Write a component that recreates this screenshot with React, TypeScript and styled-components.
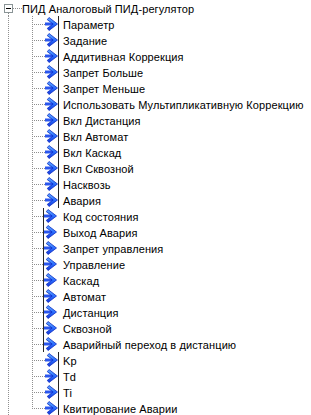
import styled, { createGlobalStyle } from 'styled-components';

type Kind = 'in' | 'out';

const items: { label: string; kind: Kind }[] = [
  { label: 'Параметр', kind: 'in' },
  { label: 'Задание', kind: 'in' },
  { label: 'Аддитивная Коррекция', kind: 'in' },
  { label: 'Запрет Больше', kind: 'in' },
  { label: 'Запрет Меньше', kind: 'in' },
  { label: 'Использовать Мультипликативную Коррекцию', kind: 'in' },
  { label: 'Вкл Дистанция', kind: 'in' },
  { label: 'Вкл Автомат', kind: 'in' },
  { label: 'Вкл Каскад', kind: 'in' },
  { label: 'Вкл Сквозной', kind: 'in' },
  { label: 'Насквозь', kind: 'in' },
  { label: 'Авария', kind: 'in' },
  { label: 'Код состояния', kind: 'out' },
  { label: 'Выход Авария', kind: 'out' },
  { label: 'Запрет управления', kind: 'out' },
  { label: 'Управление', kind: 'out' },
  { label: 'Каскад', kind: 'out' },
  { label: 'Автомат', kind: 'out' },
  { label: 'Дистанция', kind: 'out' },
  { label: 'Сквозной', kind: 'out' },
  { label: 'Аварийный переход в дистанцию', kind: 'out' },
  { label: 'Kp', kind: 'in' },
  { label: 'Td', kind: 'in' },
  { label: 'Ti', kind: 'in' },
  { label: 'Квитирование Аварии', kind: 'in' },
];

const LINE = '#8f8f8f';
const dotsDown = `repeating-linear-gradient(to bottom, ${LINE} 0 1px, transparent 1px 2px)`;
const dotsRight = `repeating-linear-gradient(to right, ${LINE} 0 1px, transparent 1px 2px)`;

const GlobalStyle = createGlobalStyle`
  body {
    margin: 0;
    background: #fff;
  }
`;

const Tree = styled.div`
  width: 311px;
  height: 415px;
  overflow: hidden;
  background: #fff;
  font-family: "Liberation Sans", Arial, sans-serif;
  font-size: 11px;
  letter-spacing: 0.1px;
  color: #000;
`;

const RootRow = styled.div`
  display: flex;
  align-items: center;
  height: 16px;
  background-image: ${dotsDown};
  background-repeat: no-repeat;
  background-position: 8px 13px;
  background-size: 1px 3px;
`;

const Expander = styled.span`
  display: flex;
  align-items: center;
  justify-content: center;
  box-sizing: border-box;
  width: 9px;
  height: 9px;
  margin-left: 4px;
  border: 1px solid #8a9496;
  background: #fff;

  &::after {
    content: '';
    width: 5px;
    height: 1px;
    background: #000;
  }
`;

const RootConnector = styled.span`
  width: 9px;
  height: 1px;
  background-image: ${dotsRight};
`;

const Label = styled.span`
  white-space: nowrap;
  line-height: 16px;
  padding-top: 1px;
`;

const ChildList = styled.ul`
  list-style: none;
  margin: 0;
  padding: 0 0 0 32px;
  background-image: ${dotsDown};
  background-repeat: no-repeat;
  background-position: 8px 0;
  background-size: 1px 100%;
`;

const ChildRow = styled.li`
  display: flex;
  align-items: center;
  height: 16px;
`;

const Connector = styled.span<{ $kind: Kind; $last: boolean }>`
  align-self: stretch;
  width: ${(p) => (p.$kind === 'out' ? 11 : 13)}px;
  background-image: ${dotsDown}, ${dotsRight};
  background-repeat: no-repeat;
  background-position: 0 0, 2px 8px;
  background-size: 1px ${(p) => (p.$last ? '9px' : '100%')}, 100% 1px;
`;

const ChildLabel = styled(Label)`
  margin-left: 4px;
`;

const Arrow = () => (
  <>
    <rect x="0" y="6.5" width="8" height="3" fill="#2a56ee" />
    <path
      d="M4 1.5 L12.5 8 L4 14.5 L2.3 12.3 L8.2 8 L2.3 3.7 Z"
      fill="url(#arrowFill)"
      stroke="#0d2cc4"
      strokeWidth="0.8"
      strokeLinejoin="round"
    />
  </>
);

const PinIcon = ({ kind }: { kind: Kind }) => (
  <svg width={kind === 'out' ? 16 : 14} height="16" viewBox={kind === 'out' ? '0 0 16 16' : '0 0 14 16'}>
    <defs>
      <linearGradient id="arrowFill" x1="0" y1="0" x2="0" y2="1">
        <stop offset="0" stopColor="#66b0ff" />
        <stop offset="0.5" stopColor="#2c70ff" />
        <stop offset="1" stopColor="#1436d8" />
      </linearGradient>
    </defs>
    {kind === 'in' ? (
      <>
        <Arrow />
        <rect x="13" y="0" width="1" height="16" fill="#262626" />
      </>
    ) : (
      <>
        <rect x="0" y="0" width="1" height="16" fill="#262626" />
        <g transform="translate(1 0)">
          <Arrow />
        </g>
      </>
    )}
  </svg>
);

export default function App() {
  return (
    <>
      <GlobalStyle />
      <Tree>
        <RootRow>
          <Expander />
          <RootConnector />
          <Label>ПИД Аналоговый ПИД-регулятор</Label>
        </RootRow>
        <ChildList>
          {items.map((item, i) => (
            <ChildRow key={item.label}>
              <Connector $kind={item.kind} $last={i === items.length - 1} />
              <PinIcon kind={item.kind} />
              <ChildLabel>{item.label}</ChildLabel>
            </ChildRow>
          ))}
        </ChildList>
      </Tree>
    </>
  );
}
